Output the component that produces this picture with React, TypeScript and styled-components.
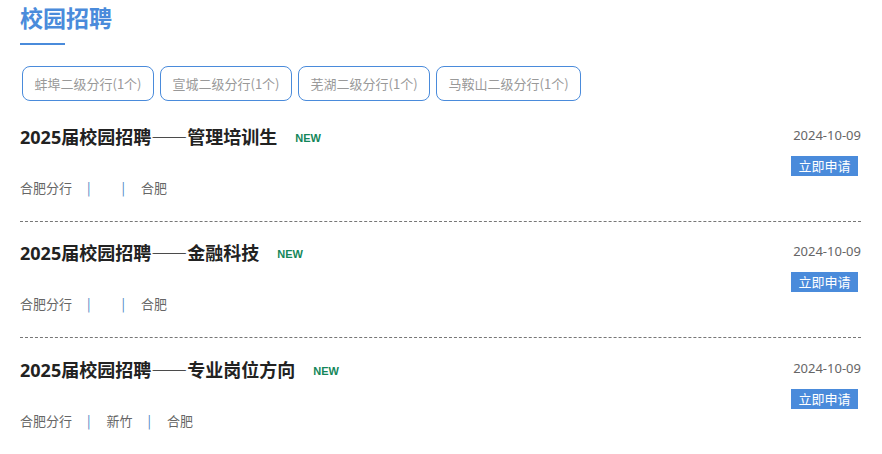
import React from "react";
import styled, { createGlobalStyle } from "styled-components";

const jobs = [
  { title: "管理培训生", date: "2024-10-09", branch: "合肥分行", dept: "", city: "合肥" },
  { title: "金融科技", date: "2024-10-09", branch: "合肥分行", dept: "", city: "合肥" },
  { title: "专业岗位方向", date: "2024-10-09", branch: "合肥分行", dept: "新竹", city: "合肥" },
];

const tabs = ["蚌埠二级分行(1个)", "宣城二级分行(1个)", "芜湖二级分行(1个)", "马鞍山二级分行(1个)"];

export default function App() {
  return (
    <>
      <GlobalStyle />
      <Page>
        <Heading>校园招聘</Heading>
        <Underline />

        <Tabs>
          {tabs.map((t) => (
            <Tab key={t}>{t}</Tab>
          ))}
        </Tabs>

        {jobs.map((job) => (
          <Item key={job.title}>
            <Left>
              <TitleRow>
                <JobTitle>
                  2025届校园招聘<Dash>——</Dash>
                  {job.title}
                </JobTitle>
                <New>NEW</New>
              </TitleRow>
              <Meta>
                <span>{job.branch}</span>
                <Bar>|</Bar>
                <span>{job.dept}</span>
                <Bar>|</Bar>
                <span>{job.city}</span>
              </Meta>
            </Left>
            <Right>
              <Date>{job.date}</Date>
              <Apply>立即申请</Apply>
            </Right>
          </Item>
        ))}
      </Page>
    </>
  );
}

const GlobalStyle = createGlobalStyle`
  body {
    margin: 0;
    background: #fff;
    font-family: "Noto Sans CJK SC", "Noto Sans", sans-serif;
  }
`;

const Page = styled.div`
  padding: 0 21px 0 20px;
`;

const Heading = styled.h1`
  margin: 0;
  padding-top: 2px;
  font-size: 23px;
  line-height: 30px;
  font-weight: 700;
  color: #4a8bdb;
`;

const Underline = styled.div`
  width: 45px;
  height: 2px;
  margin-top: 11px;
  background: #4a8bdb;
`;

const Tabs = styled.div`
  display: flex;
  gap: 6px;
  margin: 21px 0 5px 2px;
`;

const Tab = styled.div`
  height: 33px;
  padding: 0 11.5px;
  border: 1px solid #4a8bdb;
  border-radius: 8px;
  display: flex;
  align-items: center;
  font-size: 13px;
  color: #999;
`;

const Item = styled.div`
  display: flex;
  justify-content: space-between;
  padding: 18px 0 24px;
  border-bottom: 1px dashed #777;

  &:last-child {
    border-bottom: none;
    padding-top: 19px;
  }
`;

const Left = styled.div`
  display: flex;
  flex-direction: column;
  gap: 29px;
`;

const TitleRow = styled.div`
  display: flex;
  align-items: center;
  height: 24px;
`;

const JobTitle = styled.span`
  font-family: "Noto Sans", "Noto Sans CJK SC", sans-serif;
  font-size: 18px;
  font-weight: 700;
  color: #222;
`;

const Dash = styled.span`
  font-family: "Noto Sans CJK SC", sans-serif;
  font-feature-settings: "fwid";
`;

const New = styled.span`
  margin-left: 18px;
  margin-top: 3px;
  font-size: 11px;
  font-weight: 700;
  color: #14875a;
  font-family: "Liberation Sans", sans-serif;
`;

const Meta = styled.div`
  display: flex;
  align-items: center;
  height: 20px;
  font-size: 13px;
  color: #666;
`;

const Bar = styled.span`
  margin: 0 16px 0 15px;
  color: #4a7fc1;
`;

const Right = styled.div`
  display: flex;
  flex-direction: column;
  align-items: flex-end;
  gap: 11px;
  padding-top: 1px;
`;

const Date = styled.div`
  font-size: 13px;
  line-height: 20px;
  color: #666;
  font-family: "Noto Sans", sans-serif;
`;

const Apply = styled.div`
  width: 67px;
  height: 20px;
  margin-right: 3px;
  background: #4a8bdb;
  color: #fff;
  font-size: 13px;
  line-height: 20px;
  text-align: center;
`;
